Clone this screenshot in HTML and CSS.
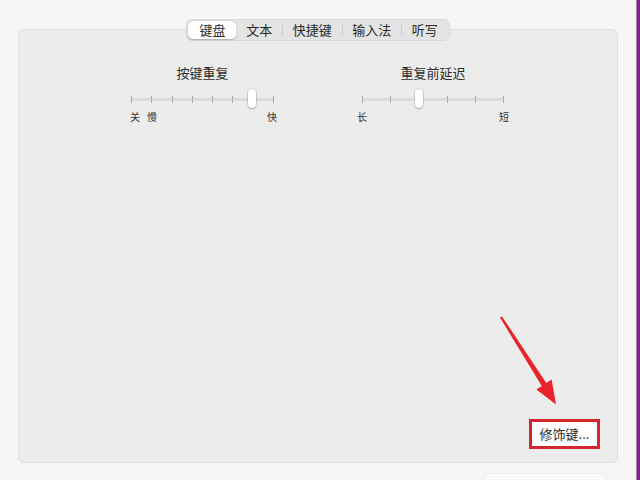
FILE: index.html
```html
<!DOCTYPE html>
<html lang="zh">
<head>
<meta charset="utf-8">
<title>键盘</title>
<link rel="stylesheet" href="styles.css">
</head>
<body>
<div class="main">
  <div class="tabs-row">
    <div class="tabs">
      <div class="tab selected">键盘</div>
      <div class="tab">文本</div>
      <div class="sep"></div>
      <div class="tab">快捷键</div>
      <div class="sep"></div>
      <div class="tab">输入法</div>
      <div class="sep"></div>
      <div class="tab">听写</div>
    </div>
  </div>
  <div class="panel">
    <div class="sliders">
      <div class="slider s1">
        <div class="title">按键重复</div>
        <div class="track">
          <span class="tick"></span><span class="tick"></span><span class="tick"></span><span class="tick"></span>
          <span class="tick"></span><span class="tick"></span><span class="tick"></span><span class="tick"></span>
          <span class="thumb" style="left: 84.8%"></span>
        </div>
        <div class="labels">
          <div class="lgroup"><span>关</span><span>慢</span></div>
          <span>快</span>
        </div>
      </div>
      <div class="slider s2">
        <div class="title">重复前延迟</div>
        <div class="track">
          <span class="tick"></span><span class="tick"></span><span class="tick"></span>
          <span class="tick"></span><span class="tick"></span><span class="tick"></span>
          <span class="thumb" style="left: 40%"></span>
        </div>
        <div class="labels">
          <span>长</span>
          <span>短</span>
        </div>
      </div>
    </div>
    <div class="spacer"></div>
    <div class="actions">
      <div class="highlight"><div class="button">修饰键...</div></div>
    </div>
  </div>
  <div class="below"></div>
  <svg class="arrow" viewBox="0 0 640 480" width="640" height="480">
    <polygon points="500,317.6 502,316.4 546.3,383 551.6,379.4 556,404.5 536.4,389.6 541.8,386" fill="#e8232b"/>
  </svg>
</div>
<div class="edge"></div>
</body>
</html>
```

FILE: styles.css
```css
* { box-sizing: border-box; }
html, body { margin: 0; padding: 0; }
body {
  width: 640px;
  height: 480px;
  overflow: hidden;
  display: flex;
  background: #f6f6f6;
  font-family: "Noto Sans CJK SC", "Noto Sans", sans-serif;
  color: #262626;
}
.main {
  width: 636px;
  height: 480px;
  padding-top: 19px;
  position: relative;
  background: #f6f6f6;
}
.edge {
  width: 4px;
  height: 480px;
  border-left: 1px solid #b07aa8;
  background: #7c2483;
}
.tabs-row {
  display: flex;
  justify-content: center;
  position: relative;
  z-index: 1;
}
.tabs {
  display: flex;
  align-items: center;
  height: 22px;
  padding: 0 1px;
  background: #e4e4e4;
  border: 1px solid #d8d8d8;
  border-radius: 6px;
}
.tab {
  height: 18px;
  line-height: 18px;
  padding: 0 9.75px;
  font-size: 13px;
  color: #2a2a2a;
  border-radius: 5px;
}
.tab.selected {
  padding: 0 11px;
  background: #ffffff;
  box-shadow: 0 0.5px 1.5px rgba(0,0,0,0.25);
}
.sep {
  width: 1px;
  height: 12px;
  background: #cdcdcd;
}
.panel {
  margin: -12px 18px 0 18px;
  height: 434px;
  background: #ececec;
  border: 1px solid #dedede;
  border-radius: 6px;
  display: flex;
  flex-direction: column;
  padding: 34px 17px 13px 112px;
}
.sliders {
  display: flex;
  gap: 88px;
}
.slider {
  display: flex;
  flex-direction: column;
  align-items: center;
}
.s1 { width: 143px; }
.s2 { width: 142px; }
.title {
  font-size: 13px;
  line-height: 18px;
  height: 18px;
  color: #2b2b2b;
}
.track {
  position: relative;
  width: 100%;
  height: 18px;
  margin-top: 8px;
  display: flex;
  justify-content: space-between;
  align-items: center;
  background: linear-gradient(#dcdcdc, #dcdcdc) center / 100% 3px no-repeat;
}
.tick {
  width: 1px;
  height: 7px;
  background: #a9a9a9;
}
.thumb {
  position: absolute;
  top: -1px;
  width: 8px;
  height: 19px;
  margin-left: -4px;
  background: #ffffff;
  border-radius: 4px;
  box-shadow: 0 0 0 0.5px rgba(0,0,0,0.18), 0 1px 2px rgba(0,0,0,0.22);
}
.labels {
  width: 100%;
  margin-top: 3px;
  display: flex;
  justify-content: space-between;
  font-size: 10px;
  line-height: 12px;
  color: #333;
}
.s1 .labels { width: 147px; margin-left: 2px; }
.s2 .labels { width: 152px; }
.lgroup {
  display: flex;
  gap: 7px;
}
.spacer { flex: 1; }
.actions {
  display: flex;
  justify-content: flex-end;
}
.highlight {
  width: 71px;
  height: 30px;
  border: 3px solid #d4262e;
  background: #ffffff;
  display: flex;
  align-items: center;
  justify-content: center;
}
.button {
  font-size: 13px;
  line-height: 18px;
  color: #2a2a2a;
}
.below {
  margin: 10px 0 0 483px;
  width: 124px;
  height: 10px;
  background: #f9f9f9;
  border: 1px solid #ebebeb;
  border-bottom: none;
  border-radius: 5px 5px 0 0;
}
.arrow {
  position: absolute;
  left: 0;
  top: 0;
  pointer-events: none;
}
```
